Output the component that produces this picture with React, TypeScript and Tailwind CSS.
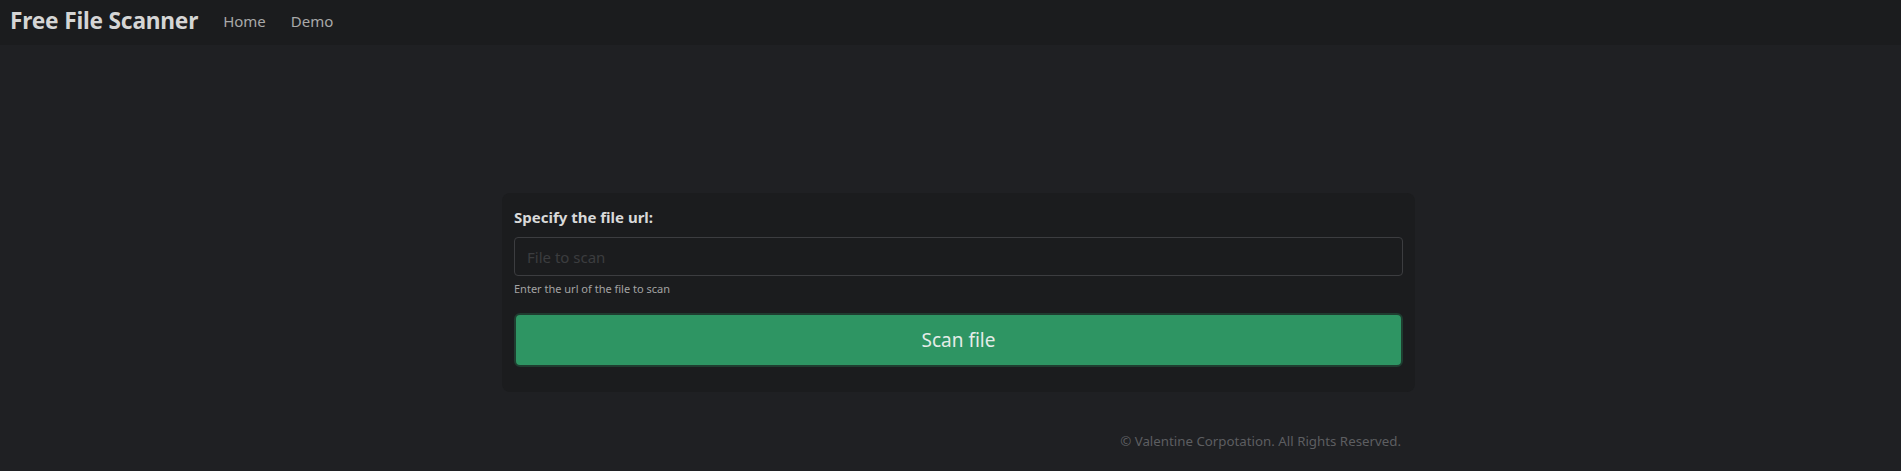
import React from 'react';

const App: React.FC = () => {
  return (
    <div className="min-h-screen bg-[#1f2023] font-['Noto_Sans',sans-serif]">
      <nav className="h-[45px] bg-[#1b1c1e] flex items-center px-[10px] pb-[3px]">
        <a className="text-[22.7px] font-bold text-[#d5d5d5] mr-[25px] tracking-[-0.2px]">Free File Scanner</a>
        <a className="text-[15px] text-[#a9a9a9] mr-[25px]">Home</a>
        <a className="text-[15px] text-[#a9a9a9]">Demo</a>
      </nav>

      <main className="pt-[148px]">
        <div className="ml-[502px] w-[913px]">
          <div className="bg-[#1b1c1e] rounded-lg px-3 pt-3 pb-[25px]">
            <label className="block text-[15px] font-bold text-[#d9d9d9] leading-6 mb-2">Specify the file url:</label>
            <input
              type="text"
              placeholder="File to scan"
              className="block w-full h-[39px] bg-[#1b1c1e] border border-[#3c3d40] rounded-[4px] px-3 text-[15px] text-[#d9d9d9] placeholder:text-[#3b3c3f] outline-none"
            />
            <div className="mt-1 text-[11px] leading-[18px] text-[#a3a3a3]">Enter the url of the file to scan</div>
            <button className="mt-[15px] w-full h-[54px] bg-[#2e9563] border-2 border-[#1f3d30] rounded-[6px] text-[19px] text-[#e4ece8]">
              Scan file
            </button>
          </div>
          <div className="mt-[39px] pr-[14px] text-right text-[13.3px] leading-5 text-[#5d5e61]">
            © Valentine Corpotation. All Rights Reserved.
          </div>
        </div>
      </main>
    </div>
  );
};

export default App;
